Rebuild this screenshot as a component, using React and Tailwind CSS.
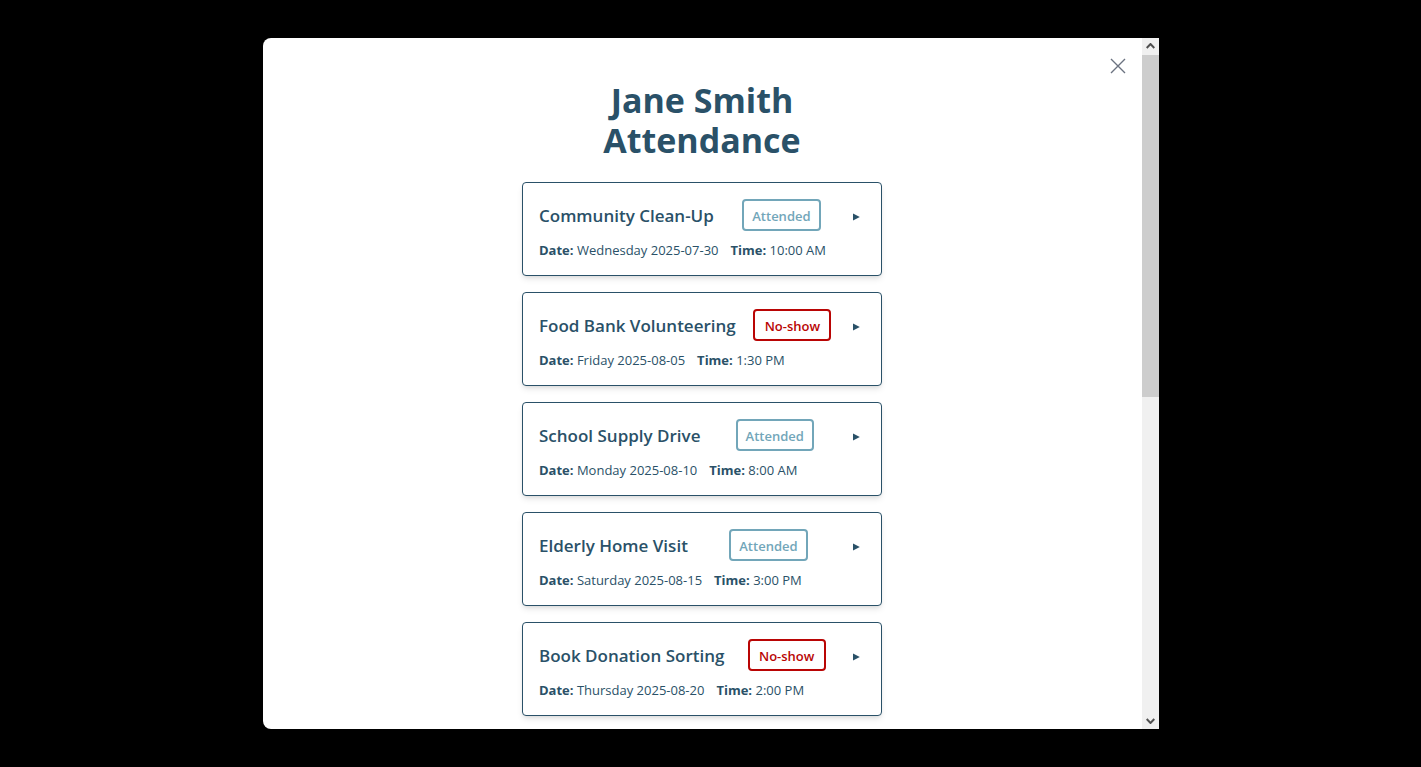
const events = [
  { title: "Community Clean-Up", attended: true, date: "Wednesday 2025-07-30", time: "10:00 AM" },
  { title: "Food Bank Volunteering", attended: false, date: "Friday 2025-08-05", time: "1:30 PM" },
  { title: "School Supply Drive", attended: true, date: "Monday 2025-08-10", time: "8:00 AM" },
  { title: "Elderly Home Visit", attended: true, date: "Saturday 2025-08-15", time: "3:00 PM" },
  { title: "Book Donation Sorting", attended: false, date: "Thursday 2025-08-20", time: "2:00 PM" },
];

function StatusBadge({ attended }) {
  const tone = attended ? "border-[#72a6b9] text-[#72a6b9]" : "border-[#b90504] text-[#b90504]";
  return (
    <span className={`min-w-[78px] rounded border-2 px-2 pt-[5px] pb-[3px] text-center text-[13px] leading-5 font-semibold ${tone}`}>
      {attended ? "Attended" : "No-show"}
    </span>
  );
}

function EventCard({ event }) {
  return (
    <li className="rounded border border-[#2a5168] bg-white px-4 pt-4 pb-[15px] shadow-md">
      <div className="flex items-center justify-between">
        <h2 className="pt-0.5 text-[17px] leading-7 font-semibold whitespace-nowrap">{event.title}</h2>
        <StatusBadge attended={event.attended} />
        <button type="button" aria-label={`Show details for ${event.title}`} className="flex h-6 w-4 items-center justify-center">
          <svg width="8" height="12" viewBox="0 0 8 12" fill="currentColor" aria-hidden="true">
            <path d="M0 4.4 6.8 7.9 0 11.4Z" />
          </svg>
        </button>
      </div>
      <p className="mt-[9px] flex gap-3 text-[13px] leading-5">
        <span><strong>Date:</strong> {event.date}</span>
        <span><strong>Time:</strong> {event.time}</span>
      </p>
    </li>
  );
}

function ScrollArrow({ down }) {
  return (
    <span className="flex h-[17px] items-center justify-center">
      <svg width="9" height="7" viewBox="0 0 9 7" fill="none" stroke="#505050" strokeWidth="2" aria-hidden="true">
        <path d={down ? "M0.7 2 4.5 6 8.3 2" : "M0.7 5 4.5 1 8.3 5"} />
      </svg>
    </span>
  );
}

export default function App() {
  return (
    <main className="flex h-screen items-center justify-center bg-black font-['Open_Sans','Noto_Sans',sans-serif] text-[#2a5168]">
      <section role="dialog" aria-labelledby="dialog-title" className="flex h-[90vh] w-full max-w-4xl overflow-hidden rounded-l-lg bg-white">
        <div className="relative min-w-0 flex-1 overflow-y-auto pt-[42px] pb-3 [scrollbar-width:none]">
          <button type="button" aria-label="Close" className="absolute top-4 right-3 flex size-6 items-center justify-center text-[#6b7280]">
            <svg width="16" height="16" viewBox="0 0 16 16" fill="none" stroke="currentColor" strokeWidth="1.4" aria-hidden="true">
              <path d="M1 1 15 15M15 1 1 15" />
            </svg>
          </button>
          <h1 id="dialog-title" className="text-center text-[34px] leading-10 font-bold">
            Jane Smith<br />Attendance
          </h1>
          <ul className="mx-auto mt-[22px] flex w-[360px] flex-col gap-4">
            {events.map((event) => <EventCard key={event.title} event={event} />)}
          </ul>
        </div>
        <div aria-hidden="true" className="flex w-[17px] shrink-0 flex-col bg-[#f0f0f0]">
          <ScrollArrow />
          <div className="flex-1">
            <div className="h-[52%] bg-[#cdcdcd]" />
          </div>
          <ScrollArrow down />
        </div>
      </section>
    </main>
  );
}
